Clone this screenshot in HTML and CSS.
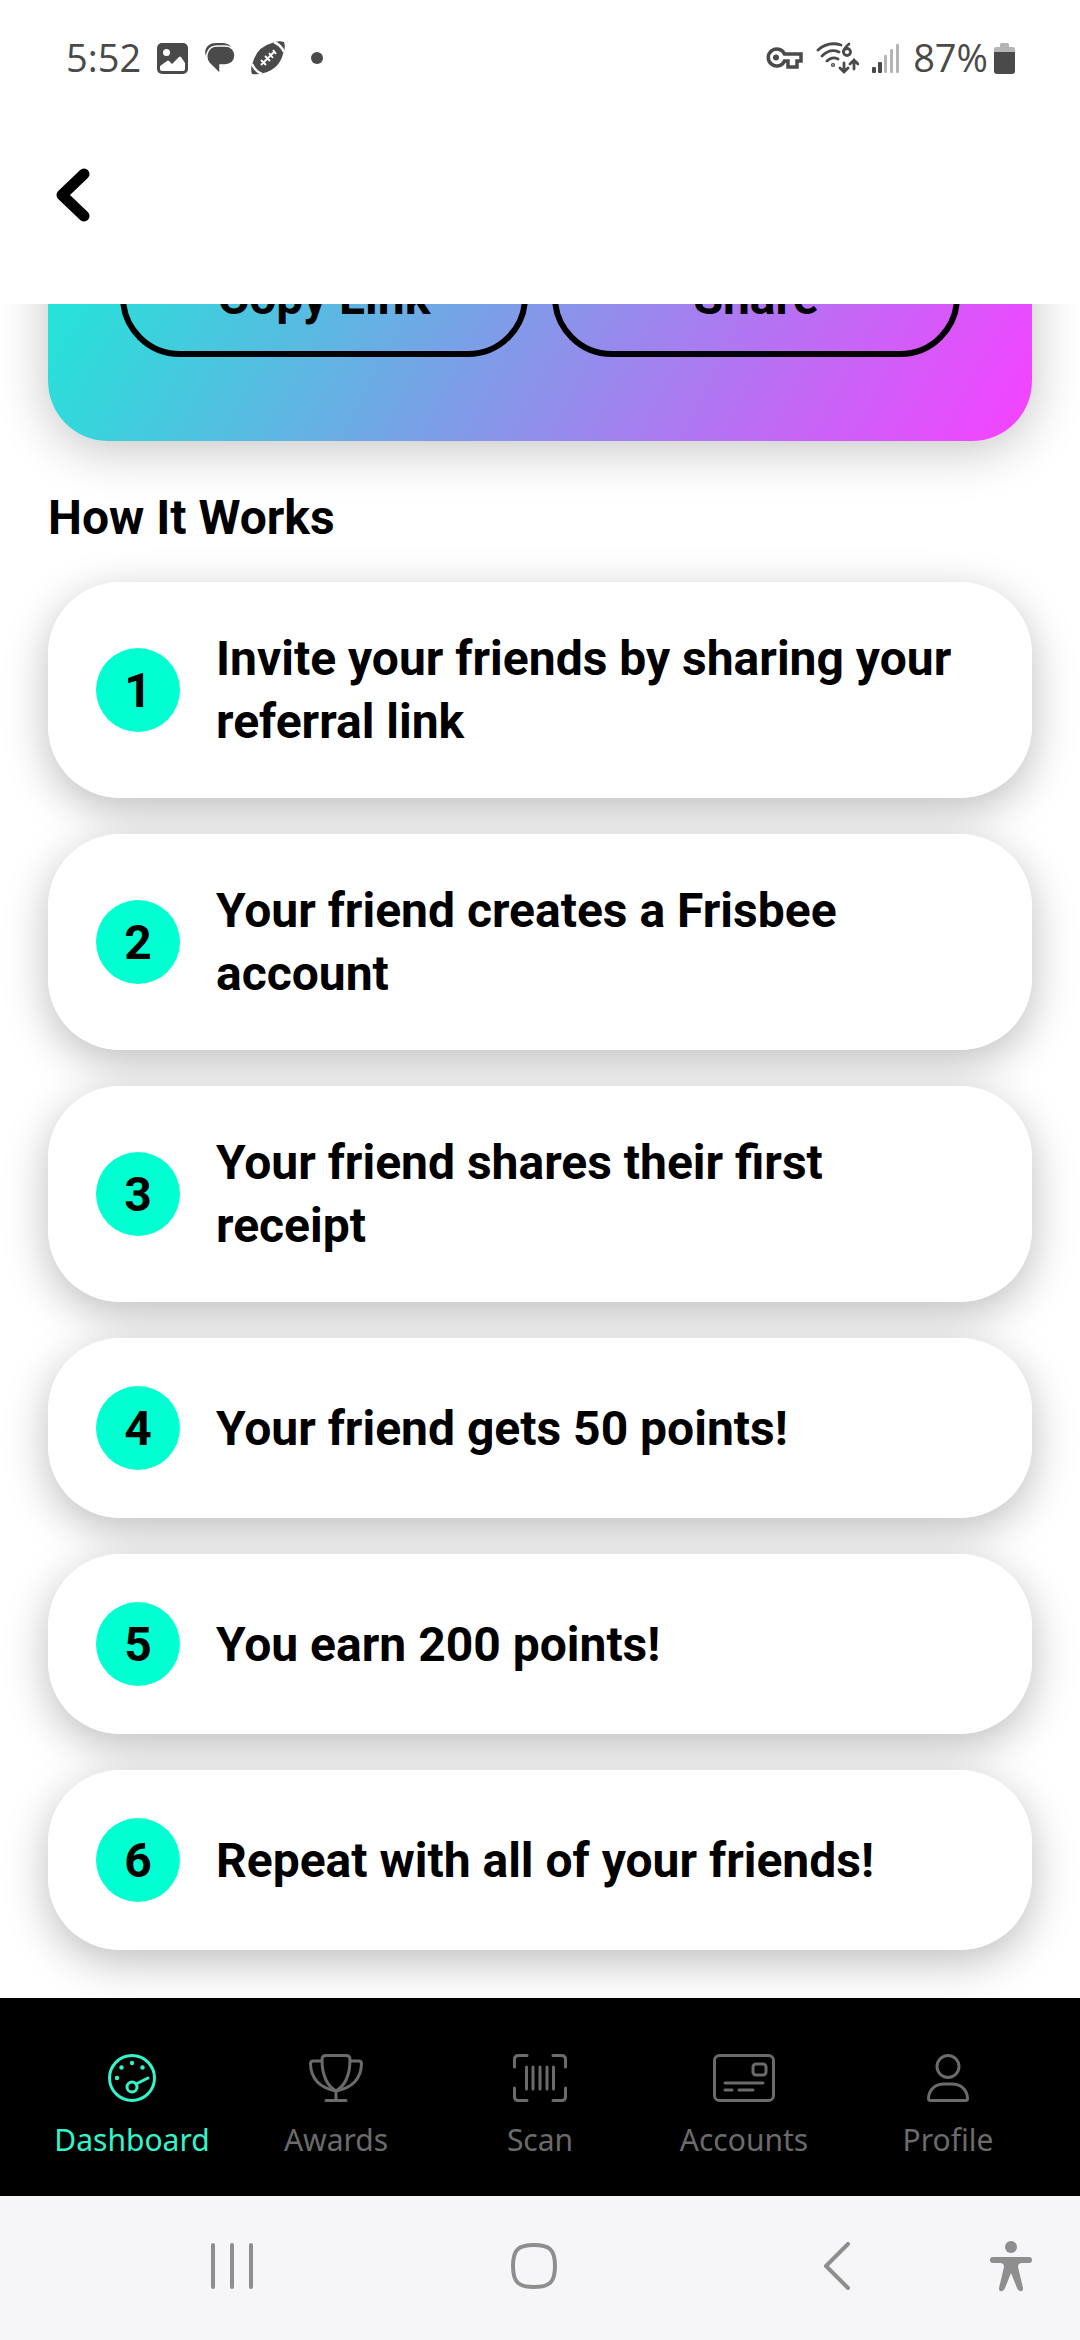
FILE: index.html
```html
<!DOCTYPE html>
<html lang="en">
<head>
<meta charset="utf-8">
<meta name="viewport" content="width=device-width, initial-scale=1">
<title>Refer a friend</title>
<link rel="stylesheet" href="styles.css">
</head>
<body>
<div class="status">
  <div class="status-left">
    <span class="status-text">5:52</span>
    <svg width="31" height="31" viewBox="0 0 31 31"><rect width="31" height="31" rx="5" fill="#4a4a4a"/><circle cx="9.500" cy="9.500" r="3.500" fill="#fff"/><path d="M3 23l7-5q1-1 2 0l3 3 7-7q1-1 2 0l4 6v6q0 2-2 2H5q-2 0-2-2z" fill="#fff"/></svg>
    <svg width="31" height="31" viewBox="0 0 31 31"><path d="M2 13C-1 5 5 0 12 0h6c4 0 7 1 9 4" fill="#4a4a4a"/><path d="M13 3h8c6 0 10 4 10 9.500S27 22 21 22h-5v9L5 20C0 13 4 3 13 3z" fill="#4a4a4a" stroke="#fff" stroke-width="1.500"/></svg>
    <svg width="34" height="34" viewBox="0 0 34 34"><path d="M21 2Q27-1 33 1Q35 7 32 13Q28 28 13 32Q7 34 1 33Q-1 27 2 21Q6 6 21 2z" fill="#4a4a4a"/><path d="M23 1Q30 4 33 11M1 23Q4 30 11 33" fill="none" stroke="#fff" stroke-width="2.500"/><path d="M10 24L24 10M10 19l5 5M14 15l5 5M18 12l4 5M22 9l3 4" fill="none" stroke="#fff" stroke-width="1.800"/></svg>
    <span class="dot"></span>
  </div>
  <div class="status-right">
    <svg width="37" height="22" viewBox="0 0 37 22"><path d="M18.500 7A8.500 8.500 0 1 0 18.500 14H22v6h9v-6h4V7z" fill="none" stroke="#4a4a4a" stroke-width="3.500"/><circle cx="10" cy="10.500" r="3" fill="#4a4a4a"/></svg>
    <svg width="43" height="32" viewBox="0 0 43 32" fill="none" stroke="#4a4a4a" stroke-width="2.800" stroke-linecap="round"><path d="M2 8Q12-1 25 3M6 14Q14 6 23 10M11 19Q16 14 22 17"/><circle cx="17" cy="23" r=".7"/><path d="M33 2Q28 6 27.500 10"/><circle cx="31" cy="10" r="3.500"/><path d="M28 21v9m-4-4 4 4 4-4M38 27v-9m-4 4 4-4 4 4"/></svg>
    <svg width="28" height="29" viewBox="0 0 28 29"><g fill="#4a4a4a"><rect y="23" width="4" height="6" rx="1"/><rect x="6" y="18" width="4" height="11" rx="1"/></g><g fill="#b5b5b5"><rect x="12" y="11" width="3" height="18" rx="1"/><rect x="18" y="5" width="3" height="24" rx="1"/><rect x="24" width="3" height="29" rx="1"/></g></svg>
    <span class="charge">
      <span class="status-text">87%</span>
      <svg width="21" height="31" viewBox="0 0 21 31"><path d="M0 9V6q0-2 2-2h4V1.500Q6 0 7.500 0h6Q15 0 15 1.500V4h4q2 0 2 2v3z" fill="#b5b5b5"/><path d="M0 9h21v19q0 3-3 3H3q-3 0-3-3z" fill="#4a4a4a"/></svg>
    </span>
  </div>
</div>

<header class="header">
  <button class="back" aria-label="Back"><svg width="34" height="54" viewBox="0 0 34 54"><path d="M28 6L6 27l22 21" fill="none" stroke="#000" stroke-width="11" stroke-linecap="round" stroke-linejoin="round"/></svg></button>
</header>

<main class="content">
  <section class="promo">
    <button class="pill">Copy Link</button>
    <button class="pill">Share</button>
  </section>
  <h2 class="title">How It Works</h2>
  <ol class="steps">
    <li class="step"><span class="num">1</span><p>Invite your friends by sharing your referral link</p></li>
    <li class="step"><span class="num">2</span><p>Your friend creates a Frisbee account</p></li>
    <li class="step"><span class="num">3</span><p>Your friend shares their first receipt</p></li>
    <li class="step"><span class="num">4</span><p>Your friend gets 50 points!</p></li>
    <li class="step"><span class="num">5</span><p>You earn 200 points!</p></li>
    <li class="step"><span class="num">6</span><p>Repeat with all of your friends!</p></li>
  </ol>
</main>

<nav class="tabs">
  <a class="tab active" href="#dashboard"><svg width="48" height="48" viewBox="0 0 48 48"><circle cx="24" cy="24" r="22.500"/><circle cx="24" cy="33" r="5"/><path d="M28 30l12-6"/><g fill="currentColor" stroke="none"><circle cx="24" cy="9" r="2.200"/><circle cx="13.500" cy="13.500" r="2.200"/><circle cx="34.500" cy="13.500" r="2.200"/><circle cx="9" cy="24" r="2.200"/></g></svg>Dashboard</a>
  <a class="tab" href="#awards"><svg width="54" height="48" viewBox="0 0 54 48"><path d="M17 1.500h20q4 0 4 4C41 20 37 31 27 37C17 31 13 20 13 5.500q0-4 4-4zM13 7H4q-2.500 0-2.500 3C2 26 12 34 27 37C42 34 52 26 52.500 10q0-3-2.500-3h-9M27 37v9M17 46.500h20"/></svg>Awards</a>
  <a class="tab" href="#scan"><svg width="54" height="48" viewBox="0 0 54 48"><path d="M1.500 13V5.500q0-4 4-4H14M40 1.500h8.500q4 0 4 4V13M52.500 34v8.500q0 4-4 4H40M14 46.500H5.500q-4 0-4-4V34M13.500 13v22M20 13v22M27 13v22M34 13v22M40.500 13v22"/></svg>Scan</a>
  <a class="tab" href="#accounts"><svg width="62" height="48" viewBox="0 0 62 48"><rect x="1.500" y="1.500" width="59" height="45" rx="5"/><rect x="40" y="10" width="13" height="11" rx="3"/><path d="M12 29h38M12 36h7M26 36h14"/></svg>Accounts</a>
  <a class="tab" href="#profile"><svg width="42" height="48" viewBox="0 0 42 48"><circle cx="21" cy="12.500" r="11"/><path d="M3.500 46.500q-2 0-2-2C2 35 9 30 17 30h8c8 0 15 5 15.500 14.500q0 2-2 2z"/></svg>Profile</a>
</nav>

<div class="system">
  <button aria-label="Recent apps"><svg width="42" height="48" viewBox="0 0 42 48"><path d="M2 3v42M21 3v42M40 3v42"/></svg></button>
  <button aria-label="Home"><svg width="48" height="48" viewBox="0 0 48 48"><path d="M24 3C39 3 45 7 45 24S39 45 24 45S3 41 3 24S9 3 24 3z"/></svg></button>
  <button aria-label="Back"><svg width="28" height="48" viewBox="0 0 28 48"><path d="M26 2L4 24l22 22"/></svg></button>
  <button aria-label="Accessibility"><svg width="42" height="51" viewBox="0 0 42 51"><g fill="#8e8e8e" stroke="none"><circle cx="21" cy="6" r="6"/><path d="M3 16h36q3 0 3 3t-3 3h-7q-4 0-4 4l5 21q0 4-3 3-2 0-3-3l-6-15-6 15q-1 3-3 3-3 1-3-3l5-21q0-4-4-4H3q-3 0-3-3t3-3z"/></g></svg></button>
</div>
</body>
</html>
```

FILE: styles.css
```css
* { box-sizing: border-box; margin: 0; padding: 0; }

body {
  display: flex;
  flex-direction: column;
  height: 100vh;
  background: #fff;
  color: #000;
  font-family: Roboto, "Liberation Sans", sans-serif;
}

button { border: 0; background: none; font: inherit; color: inherit; }
svg { display: block; flex: none; }

/* status bar */
.status {
  display: flex;
  justify-content: space-between;
  align-items: center;
  height: 116px;
  padding: 0 65px 0 66px;
  color: #4a4a4a;
}
.status-left, .status-right, .charge { display: flex; align-items: center; }
.status-left { gap: 16px; }
.status-right { gap: 13px; }
.charge { gap: 6px; }
.status-text {
  padding-bottom: 3px;
  font-family: "Open Sans", "Noto Sans", sans-serif;
  font-size: 38px;
  font-weight: 400;
  line-height: 48px;
}
.dot { width: 12px; height: 12px; margin-left: 10px; border-radius: 50%; background: #4a4a4a; }

/* header */
.header { height: 188px; padding: 52px 56px; }
.back { display: block; }

/* scrolled content */
.content {
  display: flex;
  flex: 1;
  flex-direction: column;
  justify-content: flex-end;
  min-height: 0;
  overflow: hidden;
  padding: 0 48px 48px;
}
.content > * { flex: none; }
.promo {
  display: grid;
  grid-template-columns: 1fr 1fr;
  gap: 24px;
  padding: 84px 72px;
  border-radius: 60px;
  background: linear-gradient(118deg, #14f0d6, #8c92ea 54%, #f244ff 98%);
  box-shadow: 0 8px 52px rgba(0, 0, 0, .24);
}
.pill {
  height: 120px;
  border: 6px solid #000;
  border-radius: 60px;
  font-size: 48px;
  font-weight: 700;
}
.title { margin: 48px 0 36px; font-size: 48px; font-weight: 700; line-height: 57px; }
.steps { display: grid; gap: 36px; isolation: isolate; list-style: none; }
.step {
  position: relative;
  display: flex;
  align-items: center;
  gap: 36px;
  min-height: 180px;
  padding: 45px 60px 45px 48px;
  border-radius: 72px;
  background: #fff;
  font-size: 48px;
  font-weight: 700;
  line-height: 63px;
}
/* shadow kept below every card so it never darkens a neighbour */
.step::before {
  content: "";
  position: absolute;
  inset: 0;
  z-index: -1;
  border-radius: inherit;
  box-shadow: 0 12px 44px rgba(0, 0, 0, .26);
}
.num {
  display: grid;
  flex: none;
  place-items: center;
  width: 84px;
  height: 84px;
  border-radius: 50%;
  background: #00ffd1;
}

/* tab bar */
.tabs {
  display: grid;
  grid-template-columns: repeat(5, 1fr);
  padding: 56px 30px 38px;
  background: #000;
}
.tab {
  display: flex;
  flex-direction: column;
  align-items: center;
  gap: 20px;
  color: #6b6b6b;
  font-family: "Noto Sans", "Open Sans", sans-serif;
  font-size: 30px;
  line-height: 36px;
  text-decoration: none;
}
.tab.active { color: #33f5cb; }
.tab svg { fill: none; stroke: currentColor; stroke-width: 3; stroke-linecap: round; stroke-linejoin: round; }

/* system navigation */
.system {
  display: grid;
  grid-template-columns: 1fr 1fr 1fr 48px;
  height: 144px;
  padding: 0 45px 4px 81px;
  background: #f6f6f8;
}
.system button { display: grid; place-items: center; }
.system svg { fill: none; stroke: #8e8e8e; stroke-width: 4; stroke-linecap: round; stroke-linejoin: round; }
```
